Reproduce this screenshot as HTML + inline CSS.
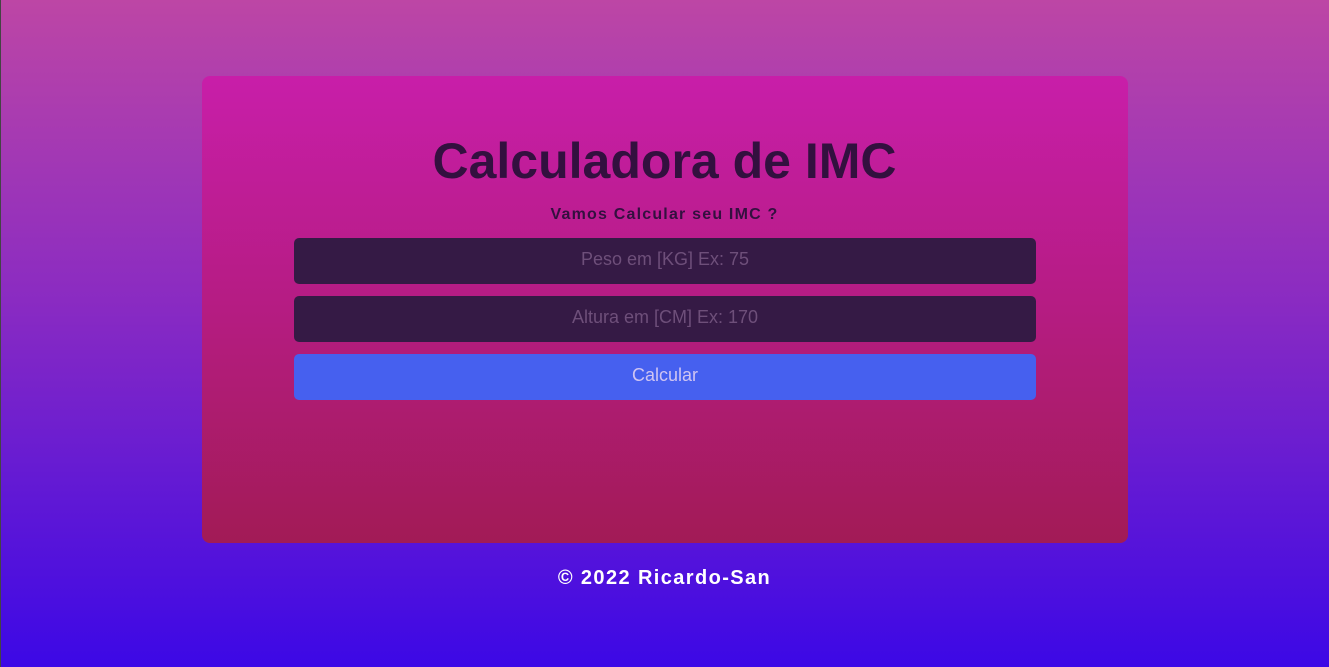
<!DOCTYPE html>
<html><head><style>
*{margin:0;padding:0;box-sizing:border-box}
body{width:1329px;height:667px;overflow:hidden;font-family:"Liberation Sans",Arial,sans-serif;background:linear-gradient(180deg,#bd46a5 0%,#8a2bc2 45%,#3c08e6 100%);position:relative}
.line{position:absolute;left:0;top:0;width:1px;height:667px;background:#444}
.card{position:absolute;left:202px;top:76px;width:926px;height:467px;border-radius:8px;background:linear-gradient(180deg,#c81ea9 0%,#b51c82 50%,#a21b56 100%)}
h1{position:absolute;left:0;right:0;top:131px;text-align:center;font-size:50px;font-weight:bold;color:#33103f;line-height:60px}
.sub{position:absolute;left:0;right:0;top:206px;text-align:center;font-size:16px;font-weight:bold;color:#33103f;letter-spacing:1.2px}
.f{position:absolute;left:294px;width:742px;height:46px;border-radius:5px;text-align:center;line-height:43px;font-size:18px}
.in{background:#351a45;color:#6e4f7a}
.btn{background:#4660ef;color:#cfc4f2}
.foot{position:absolute;left:0;right:0;top:567px;text-align:center;color:#fff;font-weight:bold;font-size:20px;letter-spacing:1.4px}
</style></head><body>
<div class="line"></div>
<div class="card"></div>
<h1>Calculadora de IMC</h1>
<div class="sub">Vamos Calcular seu IMC ?</div>
<div class="f in" style="top:238px">Peso em [KG] Ex: 75</div>
<div class="f in" style="top:296px">Altura em [CM] Ex: 170</div>
<div class="f btn" style="top:354px">Calcular</div>
<div class="foot">© 2022 Ricardo-San</div>
</body></html>
